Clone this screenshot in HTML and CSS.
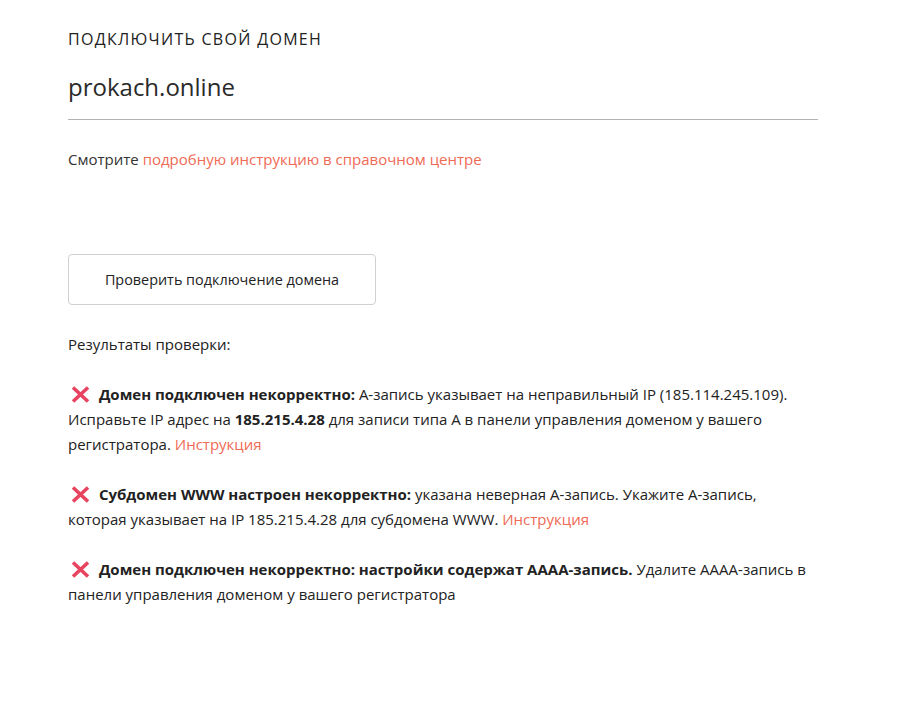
FILE: index.html
```html
<!DOCTYPE html>
<html lang="ru">
<head>
<meta charset="utf-8">
<title>Подключить свой домен</title>
<link rel="stylesheet" href="styles.css">
</head>
<body>
<main class="page">
  <section class="domain-block">
    <div class="label">ПОДКЛЮЧИТЬ СВОЙ ДОМЕН</div>
    <div class="domain-input">prokach.online</div>
    <p class="hint">Смотрите <a href="#" class="link">подробную инструкцию в справочном центре</a></p>
  </section>
  <button class="check-btn" type="button">Проверить подключение домена</button>
  <div class="results">
    <div class="results-title">Результаты проверки:</div>
    <div class="result">
      <span class="x"><svg viewBox="0 0 19 17" width="19" height="17"><path d="M2 1.5 L17 15.5 M17 1.5 L2 15.5" stroke="#e8435f" stroke-width="3.6"/></svg></span>
      <b>Домен подключен некорректно:</b> A-запись указывает на неправильный IP (185.114.245.109). Исправьте IP адрес на <b>185.215.4.28</b> для записи типа A в панели управления доменом у вашего регистратора. <a href="#" class="link">Инструкция</a>
    </div>
    <div class="result">
      <span class="x"><svg viewBox="0 0 19 17" width="19" height="17"><path d="M2 1.5 L17 15.5 M17 1.5 L2 15.5" stroke="#e8435f" stroke-width="3.6"/></svg></span>
      <b>Субдомен WWW настроен некорректно:</b> указана неверная A-запись. Укажите A-запись, которая указывает на IP 185.215.4.28 для субдомена WWW. <a href="#" class="link">Инструкция</a>
    </div>
    <div class="result">
      <span class="x"><svg viewBox="0 0 19 17" width="19" height="17"><path d="M2 1.5 L17 15.5 M17 1.5 L2 15.5" stroke="#e8435f" stroke-width="3.6"/></svg></span>
      <b>Домен подключен некорректно: настройки содержат AAAA-запись.</b> Удалите AAAA-запись в панели управления доменом у вашего регистратора
    </div>
  </div>
</main>
</body>
</html>
```
FILE: styles.css
```css
html, body {
  margin: 0;
  padding: 0;
  background: #fff;
}
body {
  font-family: "Open Sans", "Noto Sans", sans-serif;
  color: #222;
}
.page {
  padding: 28px 0 0 68px;
  width: 750px;
}
.label {
  font-size: 16px;
  line-height: 22px;
  letter-spacing: 1.3px;
  color: #222;
}
.domain-input {
  margin-top: 20px;
  font-size: 24px;
  line-height: 34px;
  color: #2a2a2a;
  padding-bottom: 15px;
  border-bottom: 1px solid #b3b3b3;
}
.hint {
  margin: 27px 0 0;
  font-size: 15px;
  line-height: 24px;
  color: #333;
}
.link {
  color: #ef6a55;
  text-decoration: none;
}
.check-btn {
  display: block;
  margin-top: 83px;
  width: 308px;
  height: 51px;
  border: 1px solid #d0d0d0;
  border-radius: 4px;
  background: #fff;
  font-family: inherit;
  font-size: 14.4px;
  color: #222;
  cursor: pointer;
}
.results {
  margin-top: 27px;
  font-size: 15px;
  line-height: 25px;
  color: #222;
  width: 740px;
}
.results-title {
  margin-bottom: 25px;
}
.result {
  margin-bottom: 25px;
}
.result b {
  font-weight: 700;
}
.x {
  display: inline-block;
  width: 19px;
  height: 17px;
  margin: 0 5px 0 3px;
  vertical-align: -3px;
  line-height: 0;
}
.x svg {
  display: block;
}
```
